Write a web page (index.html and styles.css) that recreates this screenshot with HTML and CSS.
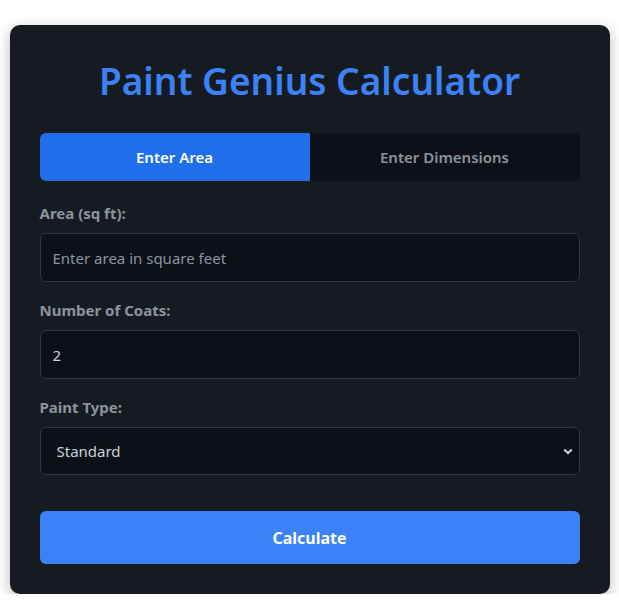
FILE: index.html
```html
<!DOCTYPE html>
<html lang="en">
<head>
<meta charset="utf-8">
<title>Paint Genius Calculator</title>
<link rel="stylesheet" href="styles.css">
</head>
<body>
<main class="card">
  <h1 class="title">Paint Genius Calculator</h1>
  <div class="tabs">
    <button class="tab tab-active" type="button">Enter Area</button>
    <button class="tab" type="button">Enter Dimensions</button>
  </div>
  <div class="group">
    <label class="label" for="area">Area (sq ft):</label>
    <input class="field" id="area" type="text" placeholder="Enter area in square feet">
  </div>
  <div class="group">
    <label class="label" for="coats">Number of Coats:</label>
    <input class="field" id="coats" type="text" value="2">
  </div>
  <div class="group">
    <label class="label" for="type">Paint Type:</label>
    <div class="select-wrap">
      <select class="field select" id="type">
        <option>Standard</option>
      </select>
      <svg class="chevron" width="10" height="7" viewBox="0 0 10 7" aria-hidden="true"><path d="M1.2 1.5 L5 5.2 L8.8 1.5" fill="none" stroke="#d0d4da" stroke-width="2"/></svg>
    </div>
  </div>
  <button class="calc" type="button">Calculate</button>
</main>
</body>
</html>
```
FILE: styles.css
```css
* { box-sizing: border-box; }
html, body { margin: 0; padding: 0; background: #ffffff; }
body {
  font-family: "Noto Sans", "Open Sans", sans-serif;
  padding-top: 25px;
}
.card {
  width: 600px;
  margin: 0 auto;
  background: #161b22;
  border-radius: 10px;
  padding: 34px 30px 30px;
  box-shadow: 0 4px 14px rgba(0, 0, 0, 0.28);
  display: flex;
  flex-direction: column;
}
.title {
  margin: 0 0 30px;
  text-align: center;
  color: #3b82f6;
  font-size: 37px;
  font-weight: 600;
  line-height: 44px;
}
.tabs {
  display: flex;
  background: #0d1117;
  border-radius: 6px;
  overflow: hidden;
  margin-bottom: 22px;
}
.tab {
  flex: 1;
  height: 48px;
  border: none;
  background: transparent;
  color: #8b949e;
  font-family: inherit;
  font-size: 15px;
  font-weight: 600;
}
.tab-active {
  background: #1f6feb;
  color: #ffffff;
}
.group {
  display: flex;
  flex-direction: column;
  margin-bottom: 18px;
}
.label {
  color: #8b949e;
  font-size: 15px;
  font-weight: 700;
  line-height: 20px;
  margin-bottom: 10px;
}
.field {
  height: 49px;
  background: #0d1117;
  border: 1px solid #30363d;
  border-radius: 6px;
  color: #c9d1d9;
  font-family: inherit;
  font-size: 15px;
  padding: 0 12px;
  outline: none;
}
.field::placeholder { color: #8b949e; }
.select-wrap { position: relative; }
.select {
  width: 100%;
  height: 48px;
  appearance: none;
  padding-left: 16px;
}
.chevron {
  position: absolute;
  right: 7px;
  top: 21px;
}
.calc {
  margin-top: 18px;
  height: 53px;
  border: none;
  border-radius: 6px;
  background: #3b82f6;
  color: #ffffff;
  font-family: inherit;
  font-size: 16px;
  font-weight: 700;
}
```
